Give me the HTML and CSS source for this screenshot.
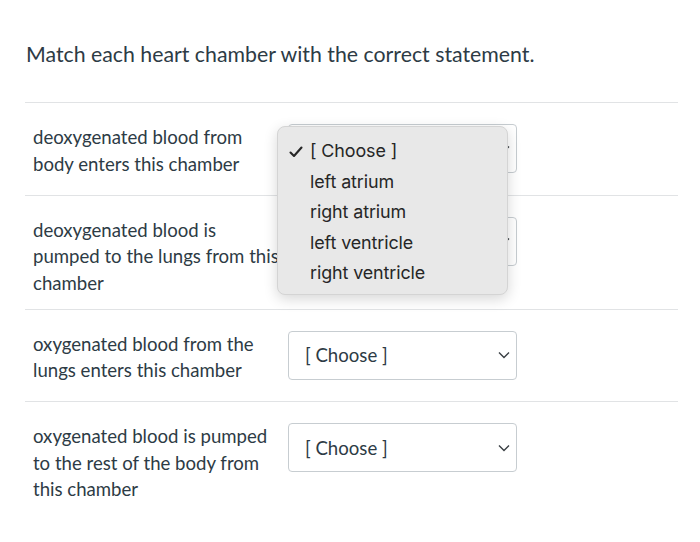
FILE: index.html
```html
<!DOCTYPE html>
<html>
<head>
<meta charset="utf-8">
<link rel="stylesheet" href="styles.css">
</head>
<body>
<div class="quiz">
  <h2 class="title">Match each heart chamber with the correct statement.</h2>
  <div class="rows">
    <div class="row">
      <div class="stmt">deoxygenated blood from body enters this chamber</div>
      <div class="select-wrap">
        <div class="select"><span>[ Choose ]</span><svg class="chev" width="12" height="8" viewBox="0 0 12 8"><path d="M1 1.5 L6 6.5 L11 1.5" fill="none" stroke="#3a3f44" stroke-width="1.4"/></svg></div>
        <div class="popup">
          <div class="opt"><svg class="check" width="14" height="12" viewBox="0 0 14 12"><path d="M1.5 6.5 L5 10 L12.5 1.5" fill="none" stroke="#262626" stroke-width="2.1" stroke-linecap="round" stroke-linejoin="round"/></svg>[ Choose ]</div>
          <div class="opt">left atrium</div>
          <div class="opt">right atrium</div>
          <div class="opt">left ventricle</div>
          <div class="opt">right ventricle</div>
        </div>
      </div>
    </div>
    <div class="row">
      <div class="stmt">deoxygenated blood is pumped to the lungs from this chamber</div>
      <div class="select-wrap">
        <div class="select"><span>[ Choose ]</span><svg class="chev" width="12" height="8" viewBox="0 0 12 8"><path d="M1 1.5 L6 6.5 L11 1.5" fill="none" stroke="#3a3f44" stroke-width="1.4"/></svg></div>
      </div>
    </div>
    <div class="row">
      <div class="stmt">oxygenated blood from the lungs enters this chamber</div>
      <div class="select-wrap">
        <div class="select"><span>[ Choose ]</span><svg class="chev" width="12" height="8" viewBox="0 0 12 8"><path d="M1 1.5 L6 6.5 L11 1.5" fill="none" stroke="#3a3f44" stroke-width="1.4"/></svg></div>
      </div>
    </div>
    <div class="row">
      <div class="stmt">oxygenated blood is pumped to the rest of the body from this chamber</div>
      <div class="select-wrap">
        <div class="select"><span>[ Choose ]</span><svg class="chev" width="12" height="8" viewBox="0 0 12 8"><path d="M1 1.5 L6 6.5 L11 1.5" fill="none" stroke="#3a3f44" stroke-width="1.4"/></svg></div>
      </div>
    </div>
  </div>
</div>
</body>
</html>
```
FILE: styles.css
```css
html, body {
  margin: 0;
  padding: 0;
  background: #ffffff;
}
body {
  font-family: Lato, "Liberation Sans", sans-serif;
  color: #2d3b45;
}
.quiz {
  margin-left: 25px;
  width: 653px;
}
.title {
  margin: 0;
  padding: 40px 0 0 1px;
  height: 61px;
  box-sizing: border-box;
  font-size: 21.3px;
  font-weight: 400;
  line-height: 28px;
  color: #2d3b45;
}
.rows {
  margin-top: 41px;
}
.row {
  display: flex;
  align-items: flex-start;
  border-top: 1px solid #e1e3e5;
  padding: 21px 0 21.5px;
}
.stmt {
  box-sizing: border-box;
  width: 263px;
  padding: 0 4px 0 8px;
  font-size: 18.6px;
  line-height: 26.5px;
  margin-bottom: -9px;
}
.select-wrap {
  position: relative;
}
.select {
  box-sizing: border-box;
  width: 229px;
  height: 49px;
  border: 1px solid #c7cdd1;
  border-radius: 4px;
  display: flex;
  align-items: center;
  justify-content: space-between;
  padding: 0 6px 0 16px;
  font-size: 18.6px;
  color: #2d3b45;
  background: #fff;
}
.chev {
  display: block;
}
.popup {
  position: absolute;
  left: -11px;
  top: 2px;
  width: 231px;
  box-sizing: border-box;
  padding: 9px 0 5px 0;
  background: #e8e8e8;
  border: 1px solid #d4d4d4;
  border-radius: 8px;
  box-shadow: 0 4px 14px rgba(0, 0, 0, 0.16);
  font-family: Inter, "Noto Sans", sans-serif;
  font-size: 17.9px;
  color: #262626;
  z-index: 5;
}
.opt {
  position: relative;
  height: 30.5px;
  line-height: 30.5px;
  padding-left: 32px;
  letter-spacing: -0.1px;
}
.check {
  position: absolute;
  left: 11px;
  top: 10px;
}
```
